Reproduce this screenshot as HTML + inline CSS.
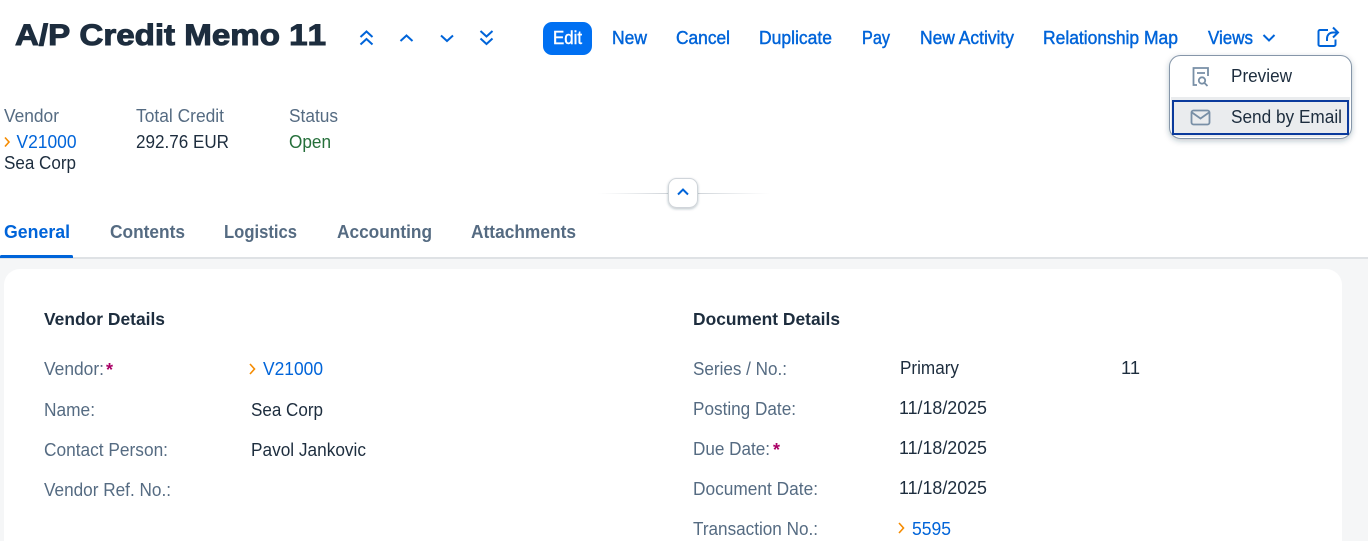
<!DOCTYPE html>
<html>
<head>
<meta charset="utf-8">
<style>
html,body{margin:0;padding:0;background:#fff;width:1368px;height:541px;overflow:hidden}
svg{display:block}
text{font-family:"Liberation Sans",sans-serif;font-size:18px;white-space:pre}
.l{fill:#556b82}
.d{fill:#1d2d3e}
.b{fill:#0064d9}
.btn{fill:#0064d9;font-size:18.500px;stroke:#0064d9;stroke-width:.45px}
.tab{fill:#556b82;font-weight:bold;font-size:18.500px}
.h{fill:#1d2d3e;font-weight:bold;font-size:17.500px}
.ic{fill:none;stroke:#0064d9;stroke-width:2}
.gi{fill:none;stroke:#788fa6;stroke-width:1.8}
.or{fill:none;stroke:#f58b00;stroke-width:1.6}
</style>
</head>
<body>
<svg width="1368" height="541" viewBox="0 0 1368 541" xmlns="http://www.w3.org/2000/svg">
<defs>
<linearGradient id="fl" x1="0" x2="1" y1="0" y2="0"><stop offset="0" stop-color="#d9dde1" stop-opacity="0"/><stop offset="1" stop-color="#cfd4d9"/></linearGradient>
<linearGradient id="fr" x1="0" x2="1" y1="0" y2="0"><stop offset="0" stop-color="#cfd4d9"/><stop offset="1" stop-color="#d9dde1" stop-opacity="0"/></linearGradient>
<filter id="sh" x="-20%" y="-20%" width="140%" height="140%"><feDropShadow dx="0" dy="2" stdDeviation="3" flood-color="#223548" flood-opacity=".28"/></filter>
<filter id="sh2" x="-40%" y="-40%" width="180%" height="180%"><feDropShadow dx="0" dy="1" stdDeviation="1.2" flood-color="#223548" flood-opacity=".3"/></filter>
</defs>

<!-- page backgrounds -->
<rect x="0" y="259" width="1368" height="282" fill="#f5f6f7"/>
<rect x="0" y="257" width="1368" height="2" fill="#dfe2e5"/>
<rect x="4" y="269" width="1338" height="290" rx="16" fill="#fff"/>

<!-- title -->
<text x="15" y="45" textLength="311" lengthAdjust="spacingAndGlyphs" style="font-size:30px;font-weight:bold;font-kerning:none;fill:#1d2d3e;stroke:#1d2d3e;stroke-width:1px">A/P Credit Memo 11</text>

<!-- nav arrows -->
<path class="ic" d="M360.500 37l6-5.500 6 5.500M360.500 44.500l6-5.500 6 5.500"/>
<path class="ic" d="M400.500 41l6-5.500 6 5.500"/>
<path class="ic" d="M441 35.500l6 5.500 6-5.500"/>
<path class="ic" d="M480.500 31l6 5.500 6-5.500M480.500 38.500l6 5.500 6-5.500"/>

<!-- toolbar -->
<rect x="543" y="22" width="49" height="33" rx="9" fill="#0070f2"/>
<text x="553" y="44" textLength="29" lengthAdjust="spacingAndGlyphs" style="fill:#fff;stroke:#fff;stroke-width:.45px;font-size:18.500px">Edit</text>
<text class="btn" x="612" y="44" textLength="35" lengthAdjust="spacingAndGlyphs">New</text>
<text class="btn" x="676" y="44" textLength="54" lengthAdjust="spacingAndGlyphs">Cancel</text>
<text class="btn" x="759" y="44" textLength="73" lengthAdjust="spacingAndGlyphs">Duplicate</text>
<text class="btn" x="862" y="44" textLength="28" lengthAdjust="spacingAndGlyphs">Pay</text>
<text class="btn" x="920" y="44" textLength="94" lengthAdjust="spacingAndGlyphs">New Activity</text>
<text class="btn" x="1043" y="44" textLength="135" lengthAdjust="spacingAndGlyphs">Relationship Map</text>
<text class="btn" x="1208" y="44" textLength="45" lengthAdjust="spacingAndGlyphs">Views</text>
<path class="ic" d="M1263.500 35l5.500 5.500 5.500-5.500"/>

<!-- share icon -->
<path class="ic" d="M1328 30h-8a1.500 1.500 0 0 0-1.500 1.500v13a1.500 1.500 0 0 0 1.500 1.500h14a1.500 1.500 0 0 0 1.500-1.500v-5"/>
<path class="ic" d="M1327 41v-2.500c0-3.500 2.500-6 6-6h4M1333 27.500l5 5-5 5"/>

<!-- header attributes -->
<text class="l" x="4" y="122" textLength="55" lengthAdjust="spacingAndGlyphs">Vendor</text>
<text class="l" x="136" y="122" textLength="88" lengthAdjust="spacingAndGlyphs">Total Credit</text>
<text class="l" x="289" y="122" textLength="49" lengthAdjust="spacingAndGlyphs">Status</text>
<path class="or" d="M5 137.500l4 4.500-4 4.500"/>
<text class="b" x="16.500" y="148" textLength="60" lengthAdjust="spacingAndGlyphs">V21000</text>
<text class="d" x="136" y="148" textLength="93" lengthAdjust="spacingAndGlyphs">292.76 EUR</text>
<text x="289" y="148" textLength="42" lengthAdjust="spacingAndGlyphs" style="fill:#256f3a">Open</text>
<text class="d" x="4" y="169" textLength="72" lengthAdjust="spacingAndGlyphs">Sea Corp</text>

<!-- collapse -->
<rect x="598" y="193" width="70" height="1" fill="url(#fl)"/>
<rect x="698" y="193" width="72" height="1" fill="url(#fr)"/>
<rect x="668.500" y="178.500" width="29" height="29" rx="8" fill="#fff" stroke="#d0d5da" filter="url(#sh2)"/>
<path class="ic" d="M678 194.500l5-5 5 5"/>

<!-- tabs -->
<text x="4" y="238" textLength="66" lengthAdjust="spacingAndGlyphs" style="fill:#0064d9;font-weight:bold;font-size:18.500px">General</text>
<text class="tab" x="110" y="238" textLength="75" lengthAdjust="spacingAndGlyphs">Contents</text>
<text class="tab" x="224" y="238" textLength="73" lengthAdjust="spacingAndGlyphs">Logistics</text>
<text class="tab" x="337" y="238" textLength="95" lengthAdjust="spacingAndGlyphs">Accounting</text>
<text class="tab" x="471" y="238" textLength="105" lengthAdjust="spacingAndGlyphs">Attachments</text>
<path d="M0 258v-1.500a1.500 1.500 0 0 1 1.500-1.500h70a1.500 1.500 0 0 1 1.500 1.500v1.500z" fill="#0064d9"/>

<!-- left form -->
<text class="h" x="44" y="325" textLength="121" lengthAdjust="spacingAndGlyphs">Vendor Details</text>
<text class="l" x="44" y="375" textLength="60" lengthAdjust="spacingAndGlyphs">Vendor:</text>
<text x="106" y="376" style="fill:#aa0066;font-weight:bold;font-size:18px">*</text>
<path class="or" d="M250 364l4.500 5-4.500 5"/>
<text class="b" x="263" y="375" textLength="60" lengthAdjust="spacingAndGlyphs">V21000</text>
<text class="l" x="44" y="416" textLength="51" lengthAdjust="spacingAndGlyphs">Name:</text>
<text class="d" x="251" y="416" textLength="72" lengthAdjust="spacingAndGlyphs">Sea Corp</text>
<text class="l" x="44" y="456" textLength="124" lengthAdjust="spacingAndGlyphs">Contact Person:</text>
<text class="d" x="251" y="456" textLength="115" lengthAdjust="spacingAndGlyphs">Pavol Jankovic</text>
<text class="l" x="44" y="496" textLength="127" lengthAdjust="spacingAndGlyphs">Vendor Ref. No.:</text>

<!-- right form -->
<text class="h" x="693" y="325" textLength="147" lengthAdjust="spacingAndGlyphs">Document Details</text>
<text class="l" x="693" y="375" textLength="94" lengthAdjust="spacingAndGlyphs">Series / No.:</text>
<text class="d" x="900" y="374" textLength="59" lengthAdjust="spacingAndGlyphs">Primary</text>
<text class="d" x="1121" y="374" textLength="19" lengthAdjust="spacingAndGlyphs">11</text>
<text class="l" x="693" y="415" textLength="103" lengthAdjust="spacingAndGlyphs">Posting Date:</text>
<text class="d" x="899" y="414" textLength="88" lengthAdjust="spacingAndGlyphs">11/18/2025</text>
<text class="l" x="693" y="455" textLength="77" lengthAdjust="spacingAndGlyphs">Due Date:</text>
<text x="773" y="456" style="fill:#aa0066;font-weight:bold;font-size:18px">*</text>
<text class="d" x="899" y="454" textLength="88" lengthAdjust="spacingAndGlyphs">11/18/2025</text>
<text class="l" x="693" y="495" textLength="125" lengthAdjust="spacingAndGlyphs">Document Date:</text>
<text class="d" x="899" y="494" textLength="88" lengthAdjust="spacingAndGlyphs">11/18/2025</text>
<text class="l" x="693" y="535" textLength="125" lengthAdjust="spacingAndGlyphs">Transaction No.:</text>
<path class="or" d="M899 523l4.500 5-4.500 5"/>
<text class="b" x="912" y="535" textLength="39" lengthAdjust="spacingAndGlyphs">5595</text>

<!-- popover menu -->
<rect x="1169.500" y="55.500" width="182" height="83" rx="11" fill="#fff" stroke="#8696a9" filter="url(#sh)"/>
<path d="M1171 97h179v30a10 10 0 0 1-10 10h-159a10 10 0 0 1-10-10z" fill="#eaecee"/>
<rect x="1173" y="101" width="175" height="33" fill="#eaecee" stroke="#0a3a9c" stroke-width="2"/>
<path class="gi" d="M1197 85h-3.500V68h14.500v8M1197 73h8"/>
<circle cx="1202" cy="80.500" r="3.200" class="gi"/>
<path class="gi" d="M1204.500 83l3 3"/>
<text class="d" x="1231" y="82" textLength="61" lengthAdjust="spacingAndGlyphs">Preview</text>
<rect x="1191.500" y="110.500" width="18" height="14" rx="2" class="gi"/>
<path class="gi" d="M1192 112.500l8.500 6 8.500-6"/>
<text class="d" x="1231" y="123" textLength="111" lengthAdjust="spacingAndGlyphs">Send by Email</text>
</svg>
</body>
</html>
